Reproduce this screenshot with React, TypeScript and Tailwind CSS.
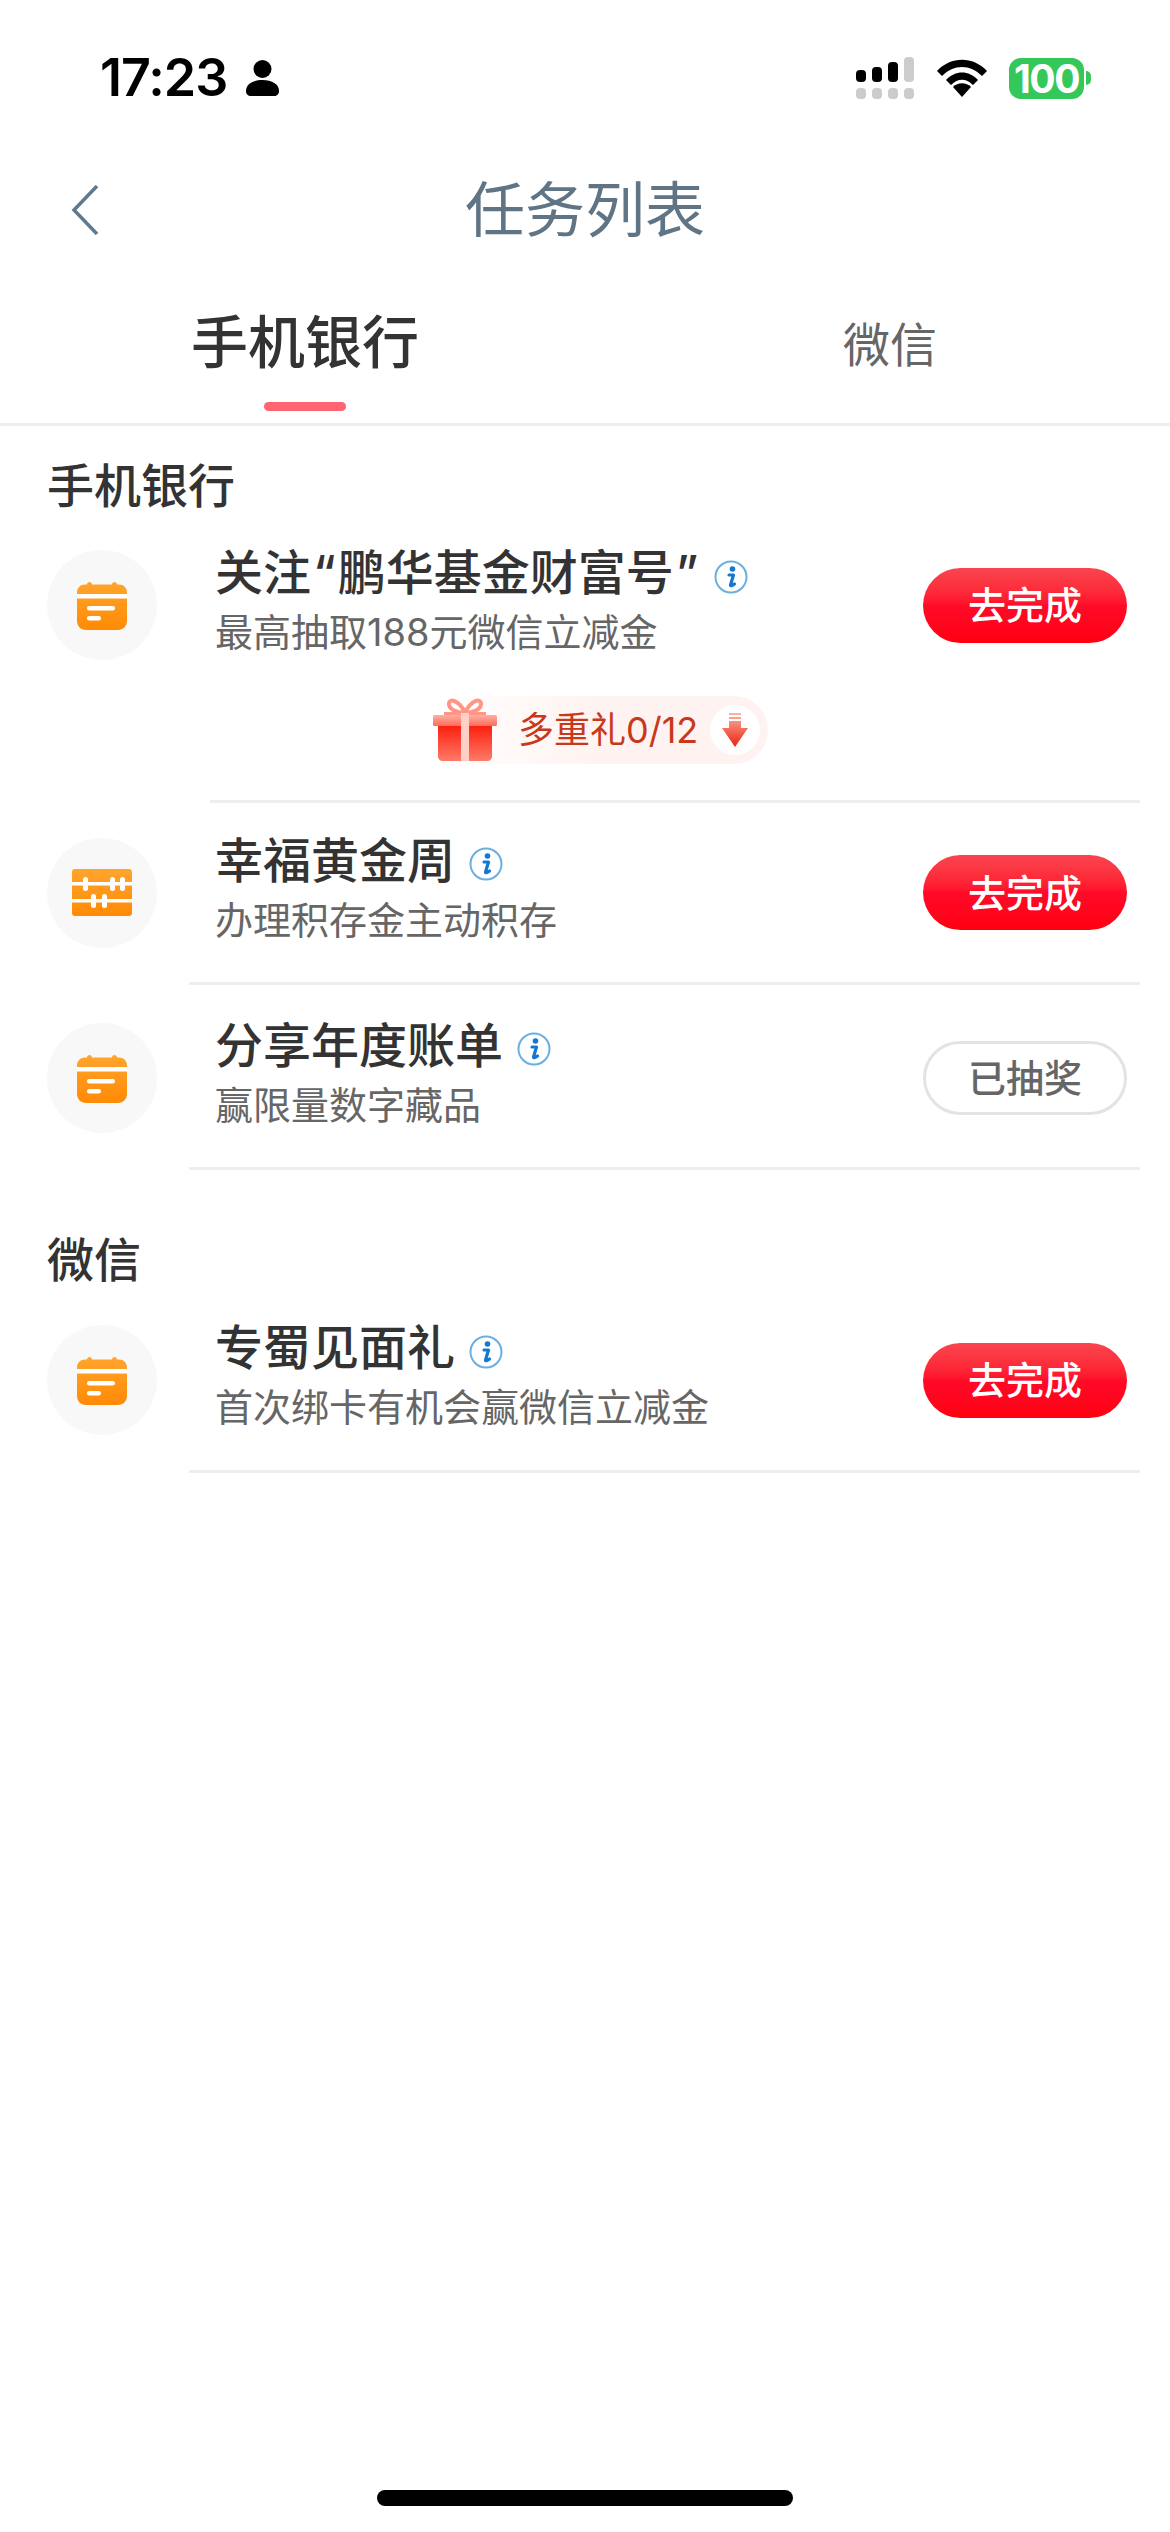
const FONT = '[font-family:Inter,"Noto_Sans_CJK_SC",sans-serif]'

function CalendarIcon({ id }: { id: string }) {
  return (
    <svg width="50" height="50" viewBox="0 0 50 50">
      <defs>
        <linearGradient id={id} x1="0" y1="0" x2="0" y2="1">
          <stop offset="0" stopColor="#ffa52e" />
          <stop offset="1" stopColor="#ff8a05" />
        </linearGradient>
      </defs>
      <path
        d="M10 4.500C10 1 15 1 15 4.500H35C35 1 40 1 40 4.500H42C46.500 4.500 50 8 50 12.500V41C50 46 46 50 41 50H9C4 50 0 46 0 41V12.500C0 8 3.500 4.500 8 4.500Z"
        fill={`url(#${id})`}
      />
      <rect x="0" y="14" width="50" height="4.500" fill="#fff" />
      <rect x="10" y="26" width="28" height="4.500" rx="2.250" fill="#fff" />
      <rect x="10" y="36" width="14" height="4.500" rx="2.250" fill="#fff" />
    </svg>
  )
}

function AbacusIcon() {
  return (
    <svg width="60" height="47" viewBox="0 0 60 47">
      <defs>
        <linearGradient id="abacus" x1="0" y1="0" x2="0" y2="1">
          <stop offset="0" stopColor="#ffa52e" />
          <stop offset="1" stopColor="#ff8a05" />
        </linearGradient>
      </defs>
      <rect width="60" height="47" rx="3" fill="url(#abacus)" />
      <rect y="13" width="60" height="3.500" fill="#fff" />
      <rect y="30" width="60" height="3.500" fill="#fff" />
      <rect x="11" y="8" width="5" height="14" rx="2.500" fill="#fff" />
      <rect x="38" y="8" width="5" height="14" rx="2.500" fill="#fff" />
      <rect x="48" y="8" width="5" height="14" rx="2.500" fill="#fff" />
      <rect x="19" y="25" width="5" height="14" rx="2.500" fill="#fff" />
      <rect x="30" y="25" width="5" height="14" rx="2.500" fill="#fff" />
    </svg>
  )
}

function InfoIcon() {
  return (
    <svg width="34" height="34" viewBox="0 0 34 34" className="mt-[7px] shrink-0">
      <circle cx="17" cy="17" r="15.500" fill="none" stroke="#6aaee2" strokeWidth="2" />
      <circle cx="18.500" cy="9" r="2.800" fill="#1478d2" />
      <path d="M15 15H19.500L16.500 25C16.300 26 18 26 20.500 24" fill="none" stroke="#1478d2" strokeWidth="3.200" strokeLinejoin="round" strokeLinecap="round" />
    </svg>
  )
}

function GiftIcon() {
  return (
    <svg width="64" height="64" viewBox="0 0 64 64" className="shrink-0">
      <defs>
        <linearGradient id="giftBody" x1="0" y1="0" x2="0" y2="1">
          <stop offset="0" stopColor="#fb1d0c" />
          <stop offset="1" stopColor="#ff7a68" />
        </linearGradient>
        <linearGradient id="giftLid" x1="0" y1="0" x2="0" y2="1">
          <stop offset="0" stopColor="#ffb0a3" />
          <stop offset="1" stopColor="#ff6a58" />
        </linearGradient>
      </defs>
      <path d="M32 15C24 15 15 11 16 5C18 -1 28 5 32 15C36 5 46 -1 48 5C49 11 40 15 32 15Z" fill="none" stroke="#ff9688" strokeWidth="4" />
      <rect x="11" y="14" width="42" height="3" fill="#ff9688" />
      <path d="M5 27H59V58C59 61 57 63 54 63H10C7 63 5 61 5 58Z" fill="url(#giftBody)" />
      <rect y="17" width="64" height="11" rx="1.500" fill="url(#giftLid)" />
      <rect x="28" y="15" width="8" height="48" fill="#ffd0c8" />
    </svg>
  )
}

function TaskButton({ done }: { done?: boolean }) {
  if (done) {
    return (
      <div className="flex h-[74px] w-[204px] shrink-0 items-center justify-center rounded-full border-[3px] border-[#e3e3e3] text-[38px] font-medium leading-none text-[#666666]">
        已抽奖
      </div>
    )
  }
  return (
    <div className="flex h-[75px] w-[204px] shrink-0 items-center justify-center rounded-full bg-gradient-to-b from-[#f9444f] via-[#ff0a28] to-[#ff0010] text-[38px] font-medium leading-none text-white">
      去完成
    </div>
  )
}

function TaskRow({
  title,
  sub,
  icon,
  done,
  height,
}: {
  title: React.ReactNode
  sub: string
  icon: React.ReactNode
  done?: boolean
  height: string
}) {
  return (
    <div className={`flex items-center pl-[47px] pr-[43px] ${height}`}>
      <div className="flex h-[110px] w-[110px] shrink-0 items-center justify-center rounded-full bg-[#f8f8f8]">
        {icon}
      </div>
      <div className="ml-[58px] flex-1 pb-[6px]">
        <div className="flex items-center gap-[14px]">
          <span className="text-[48px] font-medium leading-[60px] text-[#333333]">{title}</span>
          <InfoIcon />
        </div>
        <div className="text-[38px] leading-[58px] text-[#666666]">{sub}</div>
      </div>
      <TaskButton done={done} />
    </div>
  )
}

function Divider({ left }: { left: string }) {
  return <div className={`mr-[30px] h-[3px] bg-[#eeeeee] ${left}`} />
}

export default function App() {
  return (
    <div className={`h-[2532px] w-[1170px] overflow-hidden bg-white ${FONT}`}>
      {/* status bar */}
      <div className="flex h-[156px] items-center justify-between pl-[100px] pr-[79px]">
        <div className="flex items-center gap-[19px]">
          <span className="text-[52px] font-semibold leading-none tracking-[-1px] text-black">17:23</span>
          <svg width="33" height="36" viewBox="0 0 33 36">
            <circle cx="16.500" cy="9" r="9" fill="#000" />
            <path d="M0 31C0 24 7 20 16.500 20S33 24 33 31C33 34.500 31 36 28 36H5C2 36 0 34.500 0 31Z" fill="#000" />
          </svg>
        </div>
        <div className="flex items-center">
          <svg width="58" height="42" viewBox="0 0 58 42">
            <rect x="0" y="13" width="10" height="12" rx="4" fill="#000" />
            <rect x="16" y="10" width="10" height="15" rx="4" fill="#000" />
            <rect x="32" y="5" width="10" height="20" rx="4" fill="#000" />
            <rect x="48" y="0" width="10" height="25" rx="4" fill="#cccccc" />
            <rect x="0" y="31" width="10" height="11" rx="4" fill="#cccccc" />
            <rect x="16" y="31" width="10" height="11" rx="4" fill="#cccccc" />
            <rect x="32" y="31" width="10" height="11" rx="4" fill="#cccccc" />
            <rect x="48" y="31" width="10" height="11" rx="4" fill="#cccccc" />
          </svg>
          <svg width="50" height="38" viewBox="0 0 50 38" className="ml-[23px]">
            <path d="M0 12C14 -3 36 -3 50 12L45 17C33 5 17 5 5 17Z" fill="#000" />
            <path d="M9 21C18 11 32 11 41 21L36 26C29 19 21 19 14 26Z" fill="#000" />
            <path d="M16 28C21 23 29 23 34 28L25 38Z" fill="#000" />
          </svg>
          <div className="ml-[22px] flex h-[41px] w-[75px] items-center justify-center rounded-[12px] bg-[#34c759] text-[39px] font-bold leading-none tracking-[-1.5px] text-white">
            100
          </div>
          <div className="ml-[2px] h-[14px] w-[5px] rounded-r-full bg-[#34c759]" />
        </div>
      </div>

      {/* nav */}
      <div className="grid h-[108px] grid-cols-[1fr_auto_1fr] items-center">
        <div className="pl-[71px]">
          <svg width="28" height="50" viewBox="0 0 28 50" className="block">
            <path d="M26 1L3 25L26 49" fill="none" stroke="#5f7a8e" strokeWidth="3.500" />
          </svg>
        </div>
        <div className="text-[60px] leading-none text-[#5f7485]">任务列表</div>
        <div />
      </div>

      {/* tabs */}
      <div className="flex border-b-[3px] border-[#eeeeee]">
        <div className="flex w-[610px] flex-col items-center pb-[12px] pt-[44px]">
          <div className="text-[57px] font-medium leading-[70px] text-[#333333]">手机银行</div>
          <div className="mt-[24px] h-[9px] w-[82px] rounded-full bg-[#ff6472]" />
        </div>
        <div className="flex w-[560px] justify-center pt-[46px]">
          <div className="text-[47px] leading-[70px] text-[#666666]">微信</div>
        </div>
      </div>

      {/* 手机银行 */}
      <div className="pb-[30px] pl-[47px] pt-[30px] text-[47px] font-medium leading-[60px] text-[#333333]">手机银行</div>
      <TaskRow
        title={
          <>
            关注<span className="px-[2px]">“</span>鹏华基金财富号<span className="px-[2px]">”</span>
          </>
        }
        sub="最高抽取188元微信立减金"
        icon={<CalendarIcon id="cal1" />}
        height="h-[118px]"
      />
      <div className="ml-[433px] mb-[36px] mt-[32px] flex h-[68px] w-[335px] items-center rounded-r-full bg-gradient-to-r from-white via-[#fff3f1] to-[#fff3f1]">
        <GiftIcon />
        <span className="ml-[21px] text-[36px] leading-none text-[#c8381a]">多重礼0/12</span>
        <div className="ml-auto mr-[8px] flex h-[50px] w-[50px] items-center justify-center rounded-full bg-white">
          <svg width="26" height="34" viewBox="0 0 26 34">
            <defs>
              <linearGradient id="arrow" x1="0" y1="0" x2="0" y2="1">
                <stop offset="0" stopColor="#ffb3a5" />
                <stop offset="1" stopColor="#e8230c" />
              </linearGradient>
            </defs>
            <path d="M7 0H19V2H7ZM7 4H19V6H7ZM7 8H19V15H26L13 34L0 15H7Z" fill="url(#arrow)" />
          </svg>
        </div>
      </div>
      <Divider left="ml-[210px]" />
      <TaskRow title="幸福黄金周" sub="办理积存金主动积存" icon={<AbacusIcon />} height="h-[179px]" />
      <Divider left="ml-[189px]" />
      <TaskRow title="分享年度账单" sub="赢限量数字藏品" icon={<CalendarIcon id="cal2" />} done height="h-[182px] pt-[3px]" />
      <Divider left="ml-[189px]" />

      {/* 微信 */}
      <div className="pl-[47px] pt-[60px] text-[47px] font-medium leading-[60px] text-[#333333]">微信</div>
      <TaskRow title="专蜀见面礼" sub="首次绑卡有机会赢微信立减金" icon={<CalendarIcon id="cal3" />} height="h-[180px]" />
      <Divider left="ml-[189px]" />

      {/* home indicator */}
      <div className="mx-auto mt-[1017px] h-[16px] w-[416px] rounded-full bg-black" />
    </div>
  )
}
